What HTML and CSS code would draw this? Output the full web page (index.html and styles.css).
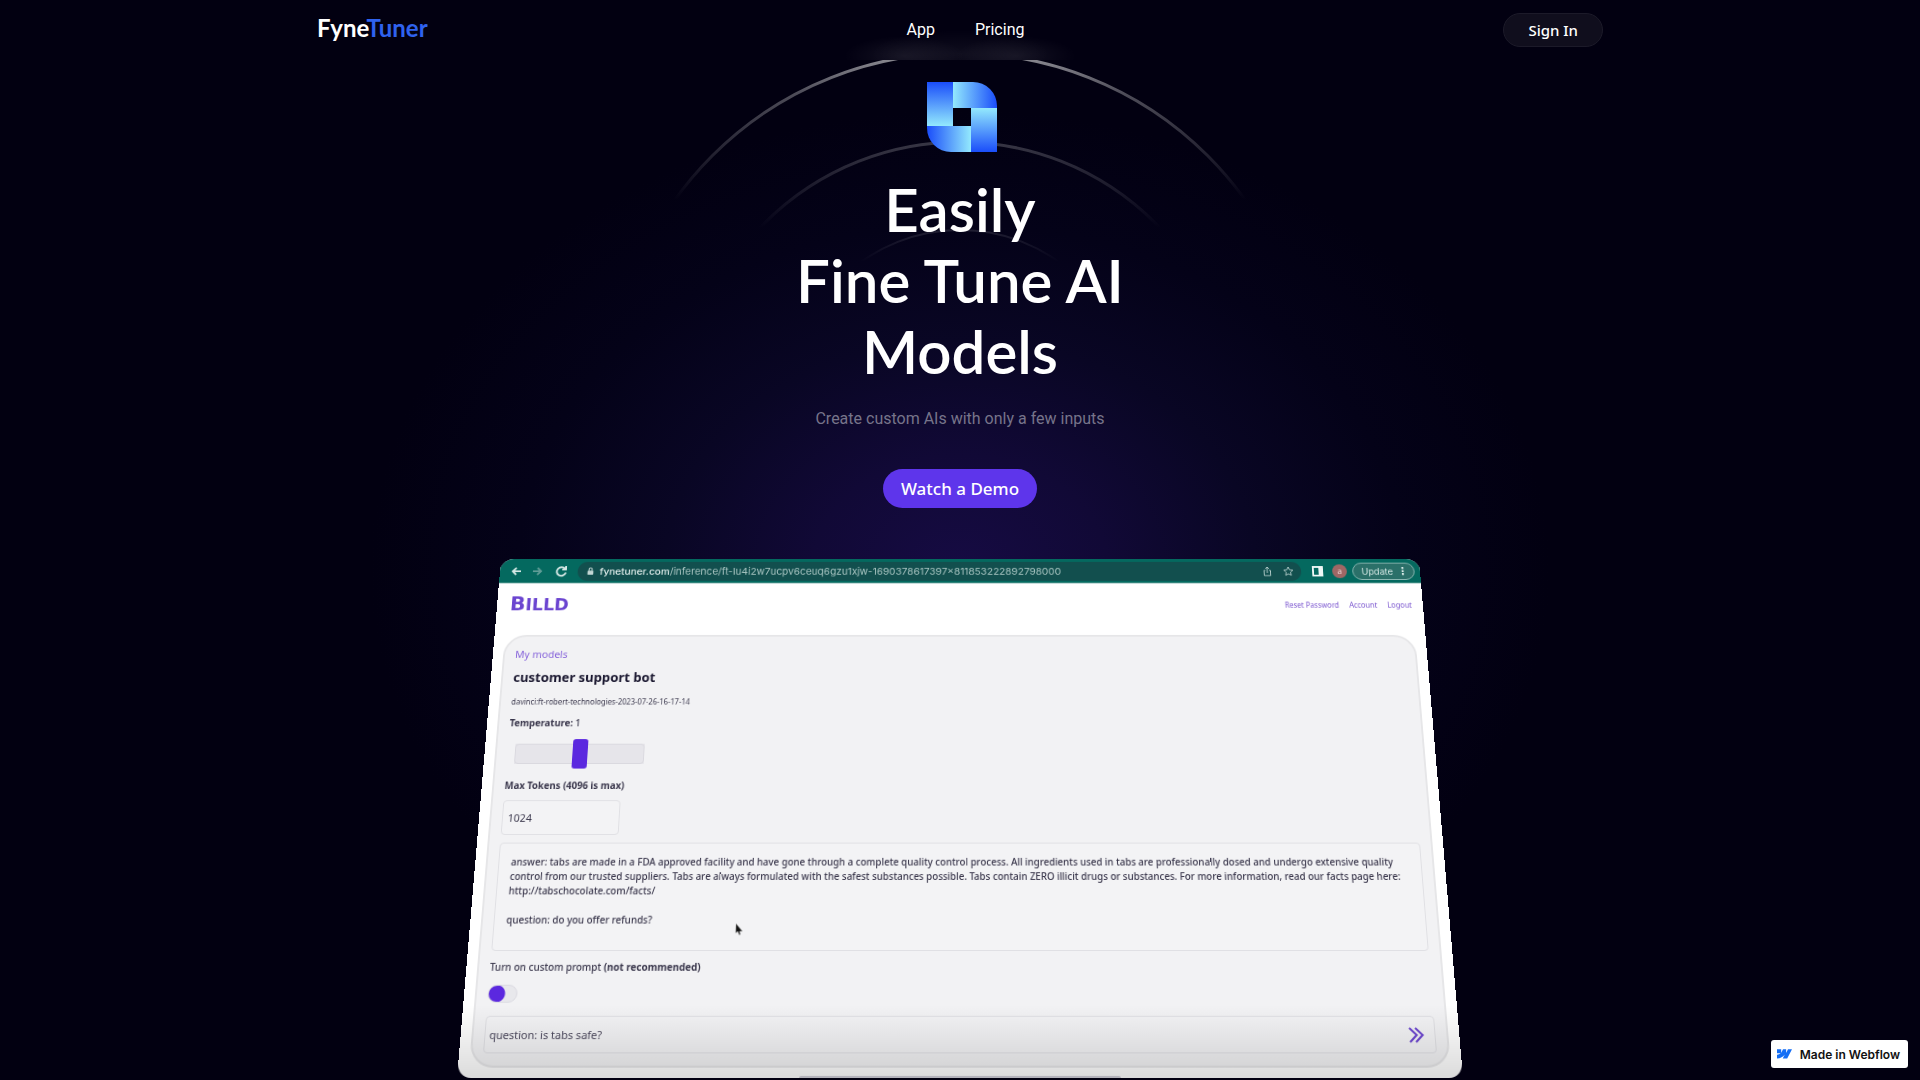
FILE: index.html
```html
<!DOCTYPE html>
<html lang="en">
<head>
<meta charset="utf-8">
<meta name="viewport" content="width=device-width, initial-scale=1">
<title>FyneTuner</title>
<link rel="stylesheet" href="styles.css">
</head>
<body>
<header class="header">
  <div class="header-inner">
    <a class="brand" href="#">Fyne<span class="brand-accent">Tuner</span></a>
    <nav class="nav">
      <a href="#">App</a>
      <a href="#">Pricing</a>
    </nav>
    <a class="sign-in" href="#">Sign In</a>
  </div>
</header>

<main class="hero">
  <svg class="arcs" viewBox="0 12 720 248" width="720" height="248" fill="none" stroke-width="2" aria-hidden="true">
    <defs>
      <linearGradient id="arc1" gradientUnits="userSpaceOnUse" x1="0" y1="0" x2="0" y2="152">
        <stop offset="0" stop-color="#fff" stop-opacity=".6"/>
        <stop offset=".3" stop-color="#fff" stop-opacity=".3"/>
        <stop offset="1" stop-color="#fff" stop-opacity="0"/>
      </linearGradient>
      <linearGradient id="arc2" gradientUnits="userSpaceOnUse" x1="0" y1="90" x2="0" y2="180">
        <stop offset="0" stop-color="#fff" stop-opacity=".22"/>
        <stop offset="1" stop-color="#fff" stop-opacity="0"/>
      </linearGradient>
      <linearGradient id="arc3" gradientUnits="userSpaceOnUse" x1="0" y1="180" x2="0" y2="214">
        <stop offset="0" stop-color="#fff" stop-opacity=".12"/>
        <stop offset="1" stop-color="#fff" stop-opacity="0"/>
      </linearGradient>
    </defs>
    <circle cx="360" cy="355" r="350" stroke="url(#arc1)" stroke-width="3"/>
    <circle cx="360" cy="370" r="276" stroke="url(#arc2)" stroke-width="3"/>
    <circle cx="360" cy="351" r="169" stroke="url(#arc3)"/>
  </svg>

  <svg class="mark" viewBox="0 0 70 70" width="70" height="70" aria-hidden="true">
    <defs>
      <linearGradient id="down" x1="0" y1="0" x2="0" y2="1"><stop offset="0" stop-color="#1a4dfa"/><stop offset="1" stop-color="#93e9fd"/></linearGradient>
      <linearGradient id="up" x1="0" y1="1" x2="0" y2="0"><stop offset="0" stop-color="#1a4dfa"/><stop offset="1" stop-color="#93e9fd"/></linearGradient>
      <linearGradient id="right" x1="0" y1="0" x2="1" y2="0"><stop offset="0" stop-color="#1a4dfa"/><stop offset="1" stop-color="#93e9fd"/></linearGradient>
      <linearGradient id="left" x1="1" y1="0" x2="0" y2="0"><stop offset="0" stop-color="#1a4dfa"/><stop offset="1" stop-color="#93e9fd"/></linearGradient>
    </defs>
    <path fill="url(#down)" d="M0 0h26v44H0z"/>
    <path fill="url(#left)" d="M26 0h20a24 24 0 0 1 24 24v2H26z"/>
    <path fill="url(#up)" d="M44 26h26v44H44z"/>
    <path fill="url(#right)" d="M0 44h44v26H24A24 24 0 0 1 0 46z"/>
  </svg>
  <h1 class="title">Easily<br>Fine Tune AI<br>Models</h1>
  <p class="lead">Create custom AIs with only a few inputs</p>
  <button class="cta" type="button">Watch a Demo</button>

  <div class="stage">
    <section class="window" aria-label="Product demo">
      <div class="toolbar">
        <svg class="tool-nav" viewBox="0 0 66 14" width="66" height="14" fill="none" stroke="#d5e8e5" stroke-width="2" aria-hidden="true">
          <path d="M11 7H2M6 3L2 7l4 4"/>
          <path d="M24 7h9M29 3l4 4-4 4" stroke="#5f9c96"/>
          <path d="M59 4a5 5 0 1 0 1 4.500M60 1v4h-4"/>
        </svg>
        <div class="address">
          <svg viewBox="0 0 10 12" width="8" height="10" aria-hidden="true"><rect x="1" y="5" width="8" height="6" rx="1" fill="#c4d6d4"/><path d="M3 5V3a2 2 0 0 1 4 0v2" fill="none" stroke="#c4d6d4" stroke-width="1.500"/></svg>
          <span class="url"><b>fynetuner.com</b>/inference/ft-Iu4i2w7ucpv6ceuq6gzu1xjw-1690378617397x811853222892798000</span>
          <svg class="address-icons" viewBox="0 0 34 12" width="34" height="12" fill="none" stroke="#b4cdca" aria-hidden="true">
            <path d="M3 5H1.500v6h7V5H7M5 8V1M3 3l2-2 2 2"/>
            <path d="M28 1l1.500 3.300 3.500.4-2.600 2.400.7 3.500L28 8.900l-3.100 1.700.7-3.500L23 4.700l3.500-.4z"/>
          </svg>
        </div>
        <svg viewBox="0 0 12 12" width="12" height="12" aria-hidden="true"><path d="M1 1h10v10H1z" fill="none" stroke="#eef8f6" stroke-width="2"/><path d="M7 1h4v10H7z" fill="#eef8f6"/></svg>
        <span class="avatar">a</span>
        <button class="update" type="button">Update<span class="dots">⋮</span></button>
      </div>

      <div class="app-nav">
        <span class="app-logo">B<small>ILLD</small></span>
        <div class="app-links">
          <a href="#">Reset Password</a>
          <a href="#">Account</a>
          <a href="#">Logout</a>
        </div>
      </div>

      <form class="card">
        <a class="crumb" href="#">My models</a>
        <h2 class="model">customer support bot</h2>
        <p class="model-id">davinci:ft-robert-technologies-2023-07-26-16-17-14</p>
        <label class="label" for="temperature"><b>Temperature:</b> 1</label>
        <input class="slider" id="temperature" type="range" min="0" max="100" value="50">
        <label class="label" for="tokens"><b>Max Tokens (4096 is max)</b></label>
        <input class="field tokens" id="tokens" type="text" value="1024">
        <textarea class="field prompt" aria-label="Prompt" rows="6">answer: tabs are made in a FDA approved facility and have gone through a complete quality control process. All ingredients used in tabs are professionally dosed and undergo extensive quality
control from our trusted suppliers. Tabs are always formulated with the safest substances possible. Tabs contain ZERO illicit drugs or substances. For more information, read our facts page here:
http://tabschocolate.com/facts/

question: do you offer refunds?</textarea>
        <label class="label" for="custom">Turn on custom prompt <b>(not recommended)</b></label>
        <input class="toggle" id="custom" type="checkbox">
        <div class="field ask">
          <input type="text" aria-label="Question" value="question: is tabs safe?">
          <button type="button" aria-label="Send"><svg viewBox="0 0 16 16" width="16" height="16" fill="none" stroke="#6a43cf" stroke-width="2" aria-hidden="true"><path d="M1 1l7 7-7 7M7 1l7 7-7 7"/></svg></button>
        </div>
      </form>
      <div class="shade"></div>
      <svg class="pointer" viewBox="0 0 8 13" width="8" height="13" aria-hidden="true"><path d="M1 0v10l2-2 2 4 1-1-1-3h3z" fill="#111" stroke="#ccc" stroke-width=".5"/></svg>
    </section>
  </div>
</main>

<a class="badge" href="#">
  <svg viewBox="0 0 30 19" width="15" height="10" aria-hidden="true"><path fill="#146ef5" d="M30 0l-9.600 18.700h-9l4-7.800h-.2C12 15.200 7.300 18 0 18.700V11s4.700-.3 7.400-3.100H0V0h8.400v6.900h.2L12 0h6.300v6.900h.2L22 0z"/></svg>
  Made in Webflow
</a>
</body>
</html>
```
FILE: styles.css
```css
* {
  box-sizing: border-box;
}

body {
  margin: 0;
  min-height: 100vh;
  background: #020011;
  color: #fff;
  font-family: "Noto Sans", "Open Sans", sans-serif;
  overflow-x: hidden;
}

a {
  color: inherit;
  text-decoration: none;
}

button,
input,
textarea {
  font-family: inherit;
}

/* Header */
.header {
  position: fixed;
  inset: 0 0 auto;
  z-index: 2;
  height: 60px;
  padding: 0 16px;
  background:
    radial-gradient(ellipse 60px 20px at calc(50% - 56px) 56px, rgba(255, 255, 255, .07), transparent),
    radial-gradient(ellipse 60px 20px at calc(50% + 56px) 56px, rgba(255, 255, 255, .07), transparent),
    radial-gradient(ellipse 90px 24px at 50% 54px, rgba(255, 255, 255, .05), transparent),
    #020011;
}

.header-inner {
  display: flex;
  align-items: center;
  justify-content: space-between;
  height: 100%;
  max-width: 1286px;
  margin: 0 auto;
}

.brand {
  padding-bottom: 4px;
  font: 700 24px/28px Lato, sans-serif;
}

.brand-accent {
  color: #2f62ee;
}

.nav {
  display: flex;
  gap: 40px;
  font: 16px/24px Roboto, sans-serif;
}

.sign-in {
  padding: 0 24px;
  border: 1px solid #1c1a29;
  border-radius: 17px;
  background: #100e1d;
  font: 500 15px/32px "Noto Sans", sans-serif;
}

/* Hero */
.hero {
  position: relative;
  display: flex;
  flex-direction: column;
  align-items: center;
  padding: 82px 16px 3px;
  background: radial-gradient(ellipse 590px 460px at 50% 570px, #160b43 0%, #110936 25%, #090624 50%, #040218 75%, #020011 100%);
}

.arcs {
  position: absolute;
  top: 60px;
  left: calc(50% - 360px);
}

.mark {
  position: relative;
  margin-left: 4px;
}

.title {
  position: relative;
  margin: 22px 0 0;
  font: 600 60px/71px Lato, sans-serif;
  text-align: center;
}

.lead {
  margin: 20px 0 0;
  color: #77748a;
  font: 16px/24px Roboto, sans-serif;
}

.cta {
  height: 39px;
  margin-top: 38px;
  padding: 0 18px;
  border: 0;
  border-radius: 20px;
  background: #5e35eb;
  color: #fff;
  font-size: 17px;
  font-weight: 500;
}

/* Tilted product window */
.stage {
  width: 100%;
  max-width: 1006px;
  margin-top: 18px;
  perspective: 1000px;
  perspective-origin: 50% 53%;
}

.window {
  position: relative;
  overflow: hidden;
  padding-bottom: 10px;
  border-radius: 14px;
  background: #fff;
  color: #3a374c;
  transform: rotateX(10deg);
  transform-origin: 50% 100%;
}

.toolbar {
  display: flex;
  align-items: center;
  gap: 10px;
  height: 28px;
  padding: 0 6px 0 12px;
  border-bottom: 1px solid #5b9c94;
  background: #04695f;
}

.address {
  display: flex;
  flex: 1;
  align-items: center;
  gap: 6px;
  height: 22px;
  margin: 0 2px 0 -3px;
  padding: 0 8px 0 10px;
  border-radius: 11px;
  background: #124f4e;
}

.url {
  flex: 1;
  color: #a9c5c2;
  font: 11px/22px Inter, sans-serif;
}

.url b {
  color: #e2eeec;
  font-weight: 500;
}

.avatar {
  width: 16px;
  height: 16px;
  border-radius: 50%;
  background: #a06765;
  color: #f0dddd;
  font-size: 9px;
  line-height: 16px;
  text-align: center;
}

.update {
  display: flex;
  align-items: center;
  justify-content: space-between;
  width: 68px;
  height: 20px;
  margin-left: -4px;
  padding: 0 6px 0 9px;
  border: 1px solid #8fbab5;
  border-radius: 10px;
  background: #2b7069;
  color: #d5e8e5;
  font: 10px Inter, sans-serif;
}

.dots {
  font: 700 12px "DejaVu Sans", sans-serif;
}

.app-nav {
  display: flex;
  align-items: center;
  justify-content: space-between;
  height: 48px;
  margin-bottom: 11px;
  padding: 0 12px 0 14px;
}

.app-logo {
  color: #6b45d0;
  font: 700 22px/24px "DejaVu Sans", sans-serif;
}

.app-logo small {
  font-size: 19px;
}

.app-links {
  display: flex;
  gap: 11px;
  color: #7a55cf;
  font-size: 8px;
}

.card {
  display: flex;
  flex-direction: column;
  align-items: flex-start;
  gap: 8px;
  margin: 0 11px;
  padding: 12px 11px;
  border: 2px solid #e6e6e8;
  border-radius: 24px;
  background: #f2f2f4;
}

.crumb {
  color: #8562da;
  font-size: 11px;
  line-height: 16px;
}

.model {
  margin: -2px 0 0;
  color: #1b1830;
  font-size: 14px;
  font-weight: 700;
  line-height: 24px;
}

.model-id {
  margin: 0;
  font-size: 8px;
  line-height: 14px;
}

.label {
  font-size: 10px;
  font-weight: 500;
  line-height: 16px;
}

.label b {
  font-weight: 700;
}

.slider {
  appearance: none;
  width: 137px;
  height: 32px;
  margin: 2px 0 2px 8px;
  background: linear-gradient(#e6e5ea, #e6e5ea) center / 100% 22px no-repeat;
  border-radius: 4px;
}

.slider::-webkit-slider-runnable-track {
  height: 22px;
  border: 1px solid #dad9df;
  border-radius: 4px;
}

.slider::-webkit-slider-thumb {
  appearance: none;
  width: 16px;
  height: 32px;
  margin-top: -6px;
  border-radius: 3px;
  background: #5b28df;
}

.field {
  border: 1px solid #e0e0e4;
  border-radius: 4px;
  background: #f3f3f5;
  color: #3a374c;
}

.tokens {
  width: 123px;
  height: 37px;
  padding: 0 5px;
  font-size: 11px;
}

.prompt {
  display: block;
  width: 100%;
  height: 112px;
  padding: 12px;
  overflow: hidden;
  resize: none;
  font-size: 10px;
  font-weight: 500;
  line-height: 15px;
  white-space: pre;
}

.toggle {
  appearance: none;
  width: 30px;
  height: 18px;
  margin: 2px 0 5px;
  border: 1px solid #dcdbe2;
  border-radius: 9px;
  background: radial-gradient(circle 9px at 8px 8px, #5b28df 8px, transparent 9px) #e8e8ec;
}

.ask {
  display: flex;
  align-items: center;
  align-self: stretch;
  justify-content: space-between;
  height: 37px;
  padding: 0 10px 0 4px;
}

.ask input {
  flex: 1;
  padding: 0;
  border: 0;
  background: none;
  color: #4b475c;
  font-size: 11px;
}

.ask button {
  display: flex;
  padding: 0;
  border: 0;
  background: none;
}

.shade {
  position: absolute;
  inset: auto 0 0;
  height: 72px;
  background: linear-gradient(rgba(0, 0, 0, 0), rgba(0, 0, 0, .14));
  pointer-events: none;
}

.shade::after {
  content: "";
  position: absolute;
  inset: auto 34% 0;
  height: 2px;
  border-radius: 2px 2px 0 0;
  background: #b4b3bb;
}

.pointer {
  position: absolute;
  left: 27%;
  top: 398px;
}

/* Badge */
.badge {
  position: fixed;
  right: 12px;
  bottom: 12px;
  z-index: 3;
  display: flex;
  align-items: center;
  gap: 8px;
  height: 28px;
  padding: 0 8px 0 6px;
  border-radius: 3px;
  background: #fff;
  color: #111;
  font: 600 12px Inter, sans-serif;
}
```
